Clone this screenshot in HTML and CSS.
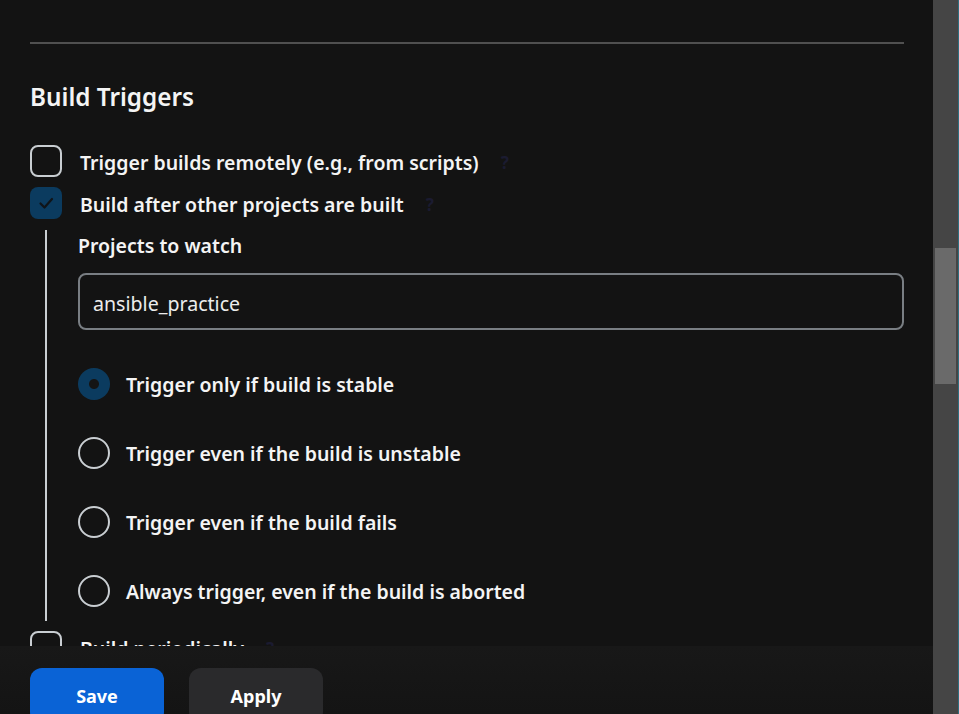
FILE: index.html
```html
<!DOCTYPE html>
<html lang="en">
<head>
<meta charset="utf-8">
<title>Build Triggers</title>
<link rel="stylesheet" href="styles.css">
</head>
<body>
<div class="app">
  <main class="main">
    <hr class="sep">
    <h2 class="title">Build Triggers</h2>

    <div class="cb-row">
      <span class="cb"></span>
      <span class="cb-label">Trigger builds remotely (e.g., from scripts)</span>
      <span class="help">?</span>
    </div>
    <div class="cb-row">
      <span class="cb checked">
        <svg viewBox="0 0 32 32" width="32" height="32"><path d="M10.5 16.5l4 4 7.5-8.5" fill="none" stroke="#101418" stroke-width="2.2" stroke-linecap="round" stroke-linejoin="round"/></svg>
      </span>
      <span class="cb-label">Build after other projects are built</span>
      <span class="help">?</span>
    </div>

    <section class="nested">
      <div class="field-label">Projects to watch</div>
      <div class="input">ansible_practice</div>
      <div class="radios">
        <div class="radio-row"><span class="radio selected"></span><span class="radio-label">Trigger only if build is stable</span></div>
        <div class="radio-row"><span class="radio"></span><span class="radio-label">Trigger even if the build is unstable</span></div>
        <div class="radio-row"><span class="radio"></span><span class="radio-label">Trigger even if the build fails</span></div>
        <div class="radio-row"><span class="radio"></span><span class="radio-label">Always trigger, even if the build is aborted</span></div>
      </div>
    </section>

    <div class="cb-row after">
      <span class="cb"></span>
      <span class="cb-label">Build periodically</span>
      <span class="help">?</span>
    </div>

    <div class="bottom-bar">
      <button class="btn primary">Save</button>
      <button class="btn secondary">Apply</button>
    </div>
  </main>
  <div class="scrollbar"><div class="thumb"></div></div>
</div>
</body>
</html>
```

FILE: styles.css
```css
html, body {
  margin: 0;
  padding: 0;
  background: #131313;
  height: 714px;
  overflow: hidden;
}
body {
  font-family: "Noto Sans", "Open Sans", "Liberation Sans", sans-serif;
  color: #f4f4f4;
}
.app {
  display: flex;
  height: 714px;
}
.main {
  flex: 1;
  position: relative;
  overflow: hidden;
  padding: 42px 29px 0 30px;
  box-sizing: border-box;
  height: 714px;
}
.sep {
  margin: 0;
  border: 0;
  height: 2px;
  background: #505050;
}
.title {
  margin: 37px 0 0;
  font-size: 24.3px;
  line-height: 30px;
  font-weight: 600;
  color: #f4f4f4;
  padding-top: 1px;
}
.cb-row {
  display: flex;
  align-items: center;
  height: 32px;
  margin-top: 10px;
}
.title + .cb-row {
  margin-top: 33px;
}
.cb {
  width: 32px;
  height: 32px;
  box-sizing: border-box;
  border: 2.5px solid #c9ced2;
  border-radius: 8px;
  flex: none;
  display: flex;
  align-items: center;
  justify-content: center;
}
.cb.checked {
  border: 0;
  background: #0b3b5f;
}
.cb-label {
  margin-left: 18px;
  font-size: 19.5px;
  font-weight: 600;
  line-height: 24px;
  padding-top: 3px;
}
.help {
  margin-left: 22px;
  font-size: 17px;
  font-weight: 700;
  color: #1b1b30;
  padding-top: 2px;
}
.nested {
  margin: 11px 0 0 15px;
  border-left: 2px solid #c9ced2;
  padding: 4px 0 14px 31px;
}
.field-label {
  font-size: 19.5px;
  font-weight: 600;
  line-height: 24px;
}
.input {
  margin-top: 15px;
  height: 57px;
  box-sizing: border-box;
  border: 2px solid #797e83;
  border-radius: 8px;
  padding: 3px 13px 0;
  display: flex;
  align-items: center;
  font-size: 19.6px;
  color: #ececec;
}
.radios {
  margin-top: 38px;
  display: flex;
  flex-direction: column;
  gap: 37px;
}
.radio-row {
  display: flex;
  align-items: center;
  height: 32px;
}
.radio {
  width: 32px;
  height: 32px;
  box-sizing: border-box;
  border: 2.5px solid #c9ced2;
  border-radius: 50%;
  flex: none;
}
.radio.selected {
  border: 0;
  background: radial-gradient(circle, #141414 0 4.5px, #0b3b5f 5.5px);
}
.radio-label {
  margin-left: 16px;
  font-size: 19.5px;
  font-weight: 600;
  line-height: 24px;
  padding-top: 2px;
}
.bottom-bar {
  position: absolute;
  left: 0;
  right: 0;
  top: 646px;
  bottom: 0;
  background: linear-gradient(180deg, #181818 0%, #161616 45%, #141414 100%);
  display: flex;
  gap: 25px;
  padding: 22px 0 0 30px;
  box-sizing: border-box;
}
.btn {
  width: 134px;
  height: 56px;
  border: 0;
  border-radius: 12px;
  font-family: inherit;
  font-size: 18px;
  font-weight: 700;
  color: #ffffff;
  padding: 0;
}
.btn.primary {
  background: #0a63d6;
}
.btn.secondary {
  background: #2a2a2c;
}
.scrollbar {
  width: 26px;
  flex: none;
  background: #454545;
  border-right: 1px solid #2f6f80;
  box-sizing: border-box;
  padding-top: 248px;
}
.thumb {
  margin-left: 2px;
  width: 21px;
  height: 136px;
  background: #6a6a6a;
}
```
